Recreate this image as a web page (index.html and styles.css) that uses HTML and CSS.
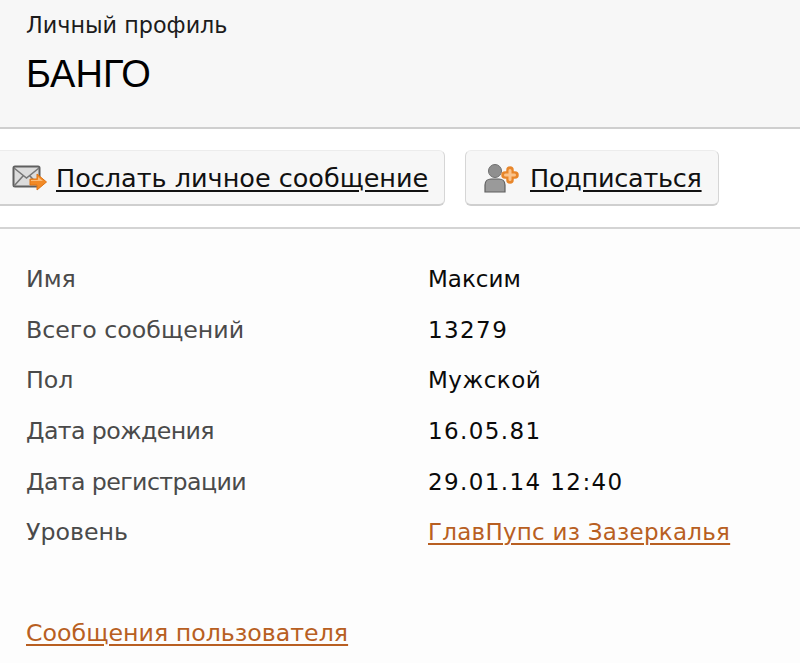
FILE: index.html
```html
<!DOCTYPE html>
<html lang="ru">
<head>
<meta charset="utf-8">
<title>Личный профиль</title>
<link rel="stylesheet" href="styles.css">
</head>
<body>
<header class="head">
  <div class="sub">Личный профиль</div>
  <h1 class="name">БАНГО</h1>
</header>
<nav class="actions">
  <div class="btn btn-msg">
    <svg class="ico" width="36" height="28" viewBox="0 0 36 28">
      <rect x="1.5" y="2.5" width="26" height="20" rx="1.5" fill="#dcdcdc" stroke="#5f5f5f" stroke-width="2"/>
      <path d="M2 4l12.5 10L27 4M2 22l9-10M27 22l-9-10" fill="none" stroke="#777" stroke-width="1.6"/>
      <path d="M18 15h7v-5l9.500 8-9.500 8v-5h-7z" fill="#f28a26" stroke="#e07412" stroke-width="1"/>
      <path d="M19 16h7v-3l5 4h-12z" fill="#fbbd7a"/>
    </svg>
    <a href="#" class="btn-link">Послать личное сообщение</a>
  </div>
  <div class="btn btn-sub">
    <svg class="ico" width="36" height="30" viewBox="0 0 36 30">
      <circle cx="11" cy="8" r="6.500" fill="#8f8f8f" stroke="#6f6f6f"/>
      <path d="M1 29v-7c0-4 3-6 6-6h8c3 0 6 2 6 6v7z" fill="#9a9a9a" stroke="#5f5f5f" stroke-width="1.200"/>
      <path d="M26 7v10M21 12h10" fill="none" stroke="#e8862a" stroke-width="7.500" stroke-linecap="round"/>
      <path d="M26 7.500v9M21.500 12h9" fill="none" stroke="#fbc48c" stroke-width="3" stroke-linecap="round"/>
    </svg>
    <a href="#" class="btn-link btn-link-tight">Подписаться</a>
  </div>
</nav>
<main class="info">
  <dl class="rows">
    <div class="row"><dt>Имя</dt><dd>Максим</dd></div>
    <div class="row"><dt>Всего сообщений</dt><dd class="num">13279</dd></div>
    <div class="row"><dt>Пол</dt><dd class="word">Мужской</dd></div>
    <div class="row"><dt class="tight">Дата рождения</dt><dd class="num">16.05.81</dd></div>
    <div class="row"><dt class="tight">Дата регистрации</dt><dd class="num">29.01.14 12:40</dd></div>
    <div class="row"><dt>Уровень</dt><dd><a href="#" class="link level">ГлавПупс из Зазеркалья</a></dd></div>
  </dl>
  <a href="#" class="link posts">Сообщения пользователя</a>
</main>
</body>
</html>
```
FILE: styles.css
```css
html, body {
  margin: 0;
  padding: 0;
  height: 663px;
  overflow: hidden;
  background: #fdfdfd;
  font-family: "DejaVu Sans", Verdana, sans-serif;
}
.head {
  box-sizing: border-box;
  height: 129px;
  padding: 12px 26px 0;
  background: #f7f7f7;
  border-bottom: 2px solid #cfcfcf;
}
.sub {
  font-size: 22.300px;
  line-height: 26px;
  color: #1c1c1c;
}
.name {
  margin: 14px 0 0;
  font-family: "Liberation Sans", Arial, sans-serif;
  font-weight: 400;
  font-size: 38px;
  line-height: 44px;
  color: #000;
}
.actions {
  box-sizing: border-box;
  height: 100px;
  display: flex;
  gap: 20px;
  padding-top: 21px;
  background: #fff;
  border-bottom: 2px solid #d4d4d4;
  margin-left: -12px;
}
.btn {
  box-sizing: border-box;
  height: 56px;
  display: flex;
  align-items: center;
  background: #f7f7f7;
  border: 1px solid #d6d6d6;
  border-top-color: #ececec;
  border-bottom: 2px solid #cfcfcf;
  border-radius: 6px;
}
.btn-msg {
  width: 457px;
  padding-left: 23px;
  gap: 8px;
}
.btn-sub {
  width: 254px;
  padding-left: 18px;
  gap: 10px;
}
.ico {
  flex: none;
}
.btn-link {
  font-size: 25.500px;
  color: #111;
  text-decoration: underline;
  text-decoration-thickness: 2px;
  text-underline-offset: 3px;
  white-space: nowrap;
}
.btn-link-tight {
  letter-spacing: -0.270px;
}
.info {
  padding: 25px 26px 0;
}
.rows {
  margin: 0;
}
.row {
  display: flex;
  height: 50.600px;
  align-items: center;
  font-size: 23.700px;
}
.row dt {
  width: 402px;
  color: #4a4a4a;
}
.row .tight {
  letter-spacing: -0.600px;
}
.row dd {
  margin: 0;
  color: #0a0a0a;
  font-size: 23px;
}
.row .num {
  letter-spacing: 1.400px;
}
.row .word {
  letter-spacing: 0.500px;
}
.link {
  color: #b85f22;
  text-decoration: underline;
  text-decoration-thickness: 2px;
  text-underline-offset: 3px;
  font-size: 23.700px;
}
.level {
  font-size: 23px;
  letter-spacing: 0.250px;
}
.posts {
  display: block;
  margin-top: 62px;
  line-height: 26px;
}
```
